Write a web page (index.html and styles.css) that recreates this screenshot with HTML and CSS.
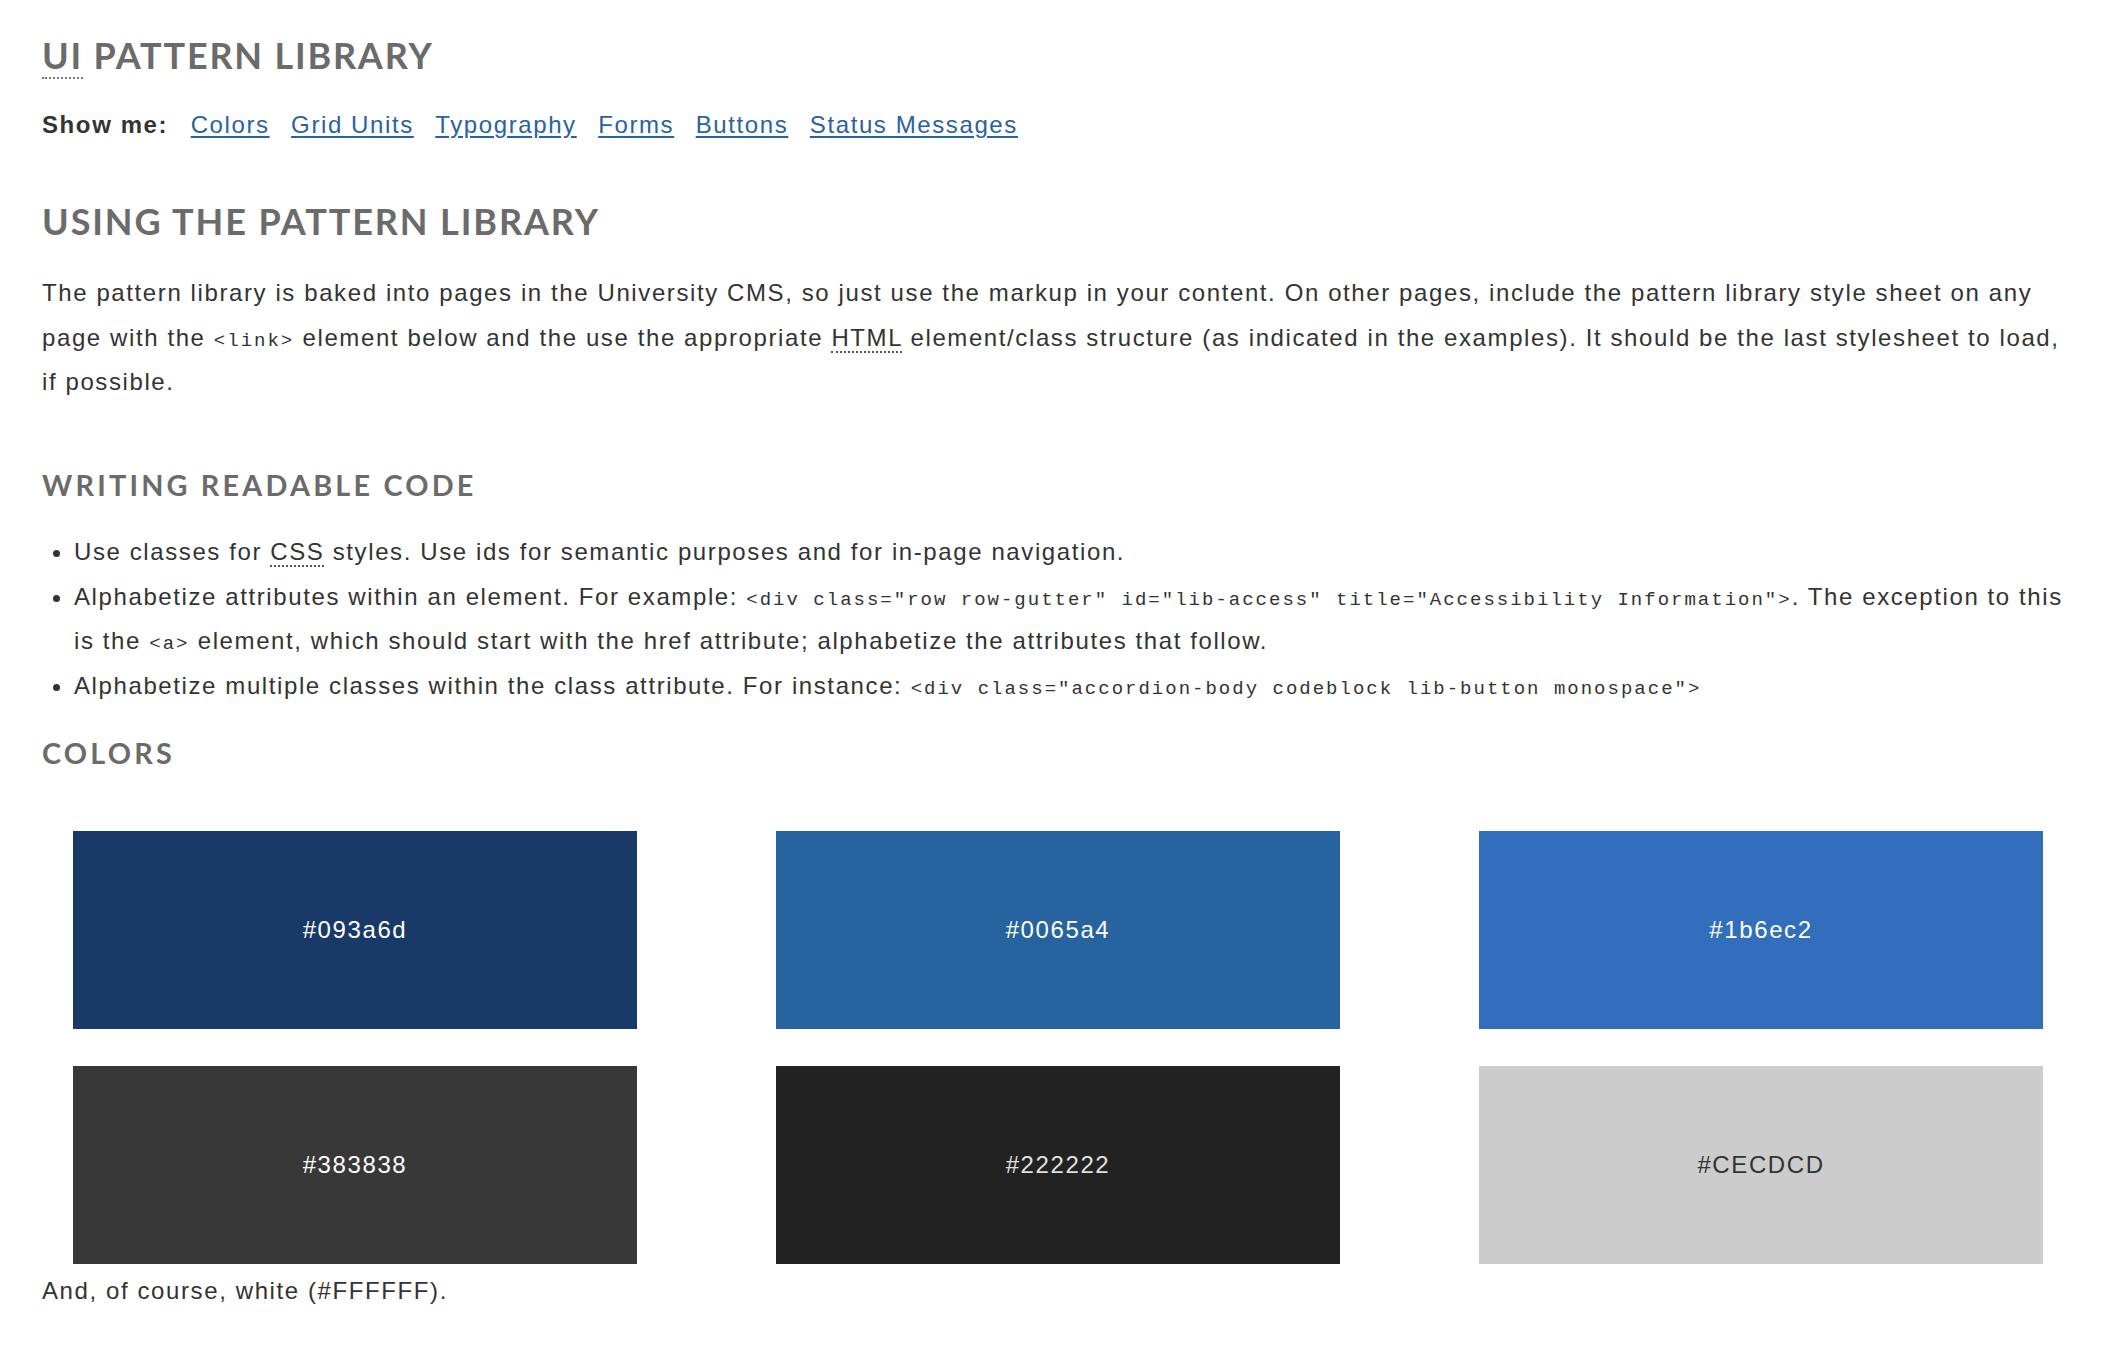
FILE: index.html
```html
<!DOCTYPE html>
<html lang="en">
<head>
<meta charset="utf-8">
<title>UI Pattern Library</title>
<link rel="stylesheet" href="styles.css">
</head>
<body>
<main class="page">
  <h1 class="title"><abbr title="User Interface">UI</abbr> PATTERN LIBRARY</h1>
  <nav class="showme">
    <strong class="showme-label">Show me:</strong>
    <a href="#colors">Colors</a>
    <a href="#grid">Grid Units</a>
    <a href="#type">Typography</a>
    <a href="#forms">Forms</a>
    <a href="#buttons">Buttons</a>
    <a href="#status">Status Messages</a>
  </nav>

  <h2 class="section-title">USING THE PATTERN LIBRARY</h2>
  <p class="text intro">The pattern library is baked into pages in the University CMS, so just use the markup in your content. On other pages, include the pattern library style sheet on any page with the <code>&lt;link&gt;</code> element below and the use the appropriate <abbr title="HyperText Markup Language">HTML</abbr> element/class structure (as indicated in the examples). It should be the last stylesheet to load, if possible.</p>

  <h3 class="sub-title">WRITING READABLE CODE</h3>
  <ul class="text rules">
    <li>Use classes for <abbr title="Cascading Style Sheets">CSS</abbr> styles. Use ids for semantic purposes and for in-page navigation.</li>
    <li>Alphabetize attributes within an element. For example: <code>&lt;div class="row row-gutter" id="lib-access" title="Accessibility Information"&gt;</code>. The exception to this is the <code>&lt;a&gt;</code> element, which should start with the href attribute; alphabetize the attributes that follow.</li>
    <li>Alphabetize multiple classes within the class attribute. For instance: <code>&lt;div class="accordion-body codeblock lib-button monospace"&gt;</code></li>
  </ul>

  <h3 class="sub-title colors-title" id="colors">COLORS</h3>
  <div class="swatches">
    <div class="swatch sw-1">#093a6d</div>
    <div class="swatch sw-2">#0065a4</div>
    <div class="swatch sw-3">#1b6ec2</div>
    <div class="swatch sw-4">#383838</div>
    <div class="swatch sw-5">#222222</div>
    <div class="swatch sw-6">#CECDCD</div>
  </div>
  <p class="text white-note">And, of course, white (#FFFFFF).</p>
</main>
</body>
</html>
```

FILE: styles.css
```css
html, body {
  margin: 0;
  padding: 0;
  background: #ffffff;
}

body {
  font-family: "Liberation Sans", Arial, Helvetica, sans-serif;
  font-size: 24px;
  letter-spacing: 1.6px;
  color: #333333;
}

.page {
  padding: 0 38px 0 42px;
}

abbr {
  text-decoration: none;
  border-bottom: 2px dotted #555;
}

.title {
  font-family: Lato, "Open Sans", sans-serif;
  font-weight: 700;
  font-size: 36px;
  line-height: 43px;
  letter-spacing: 1.8px;
  color: #6b6b6b;
  margin: 34px 0 0;
}

.title abbr {
  border-bottom-color: #777;
}

.showme {
  display: flex;
  align-items: baseline;
  gap: 21.5px;
  line-height: 44.8px;
  margin-top: 26px;
}

.showme-label {
  font-weight: 700;
  color: #333;
  margin-right: 1px;
}

.showme a {
  color: #2a62a0;
  text-decoration: underline;
  text-underline-offset: 3px;
}

.section-title {
  font-family: Lato, "Open Sans", sans-serif;
  font-weight: 700;
  font-size: 36px;
  line-height: 43px;
  letter-spacing: 1.9px;
  color: #6b6b6b;
  margin: 52px 0 0;
}

.text {
  line-height: 44.8px;
  margin: 0;
}

.intro {
  margin-top: 28px;
}

code {
  font-family: "Liberation Mono", "Courier New", monospace;
  font-size: 19px;
  line-height: 1;
  letter-spacing: 2px;
  color: #333;
}

.sub-title {
  font-family: Lato, "Open Sans", sans-serif;
  font-weight: 700;
  font-size: 28.8px;
  line-height: 34.6px;
  letter-spacing: 3.2px;
  color: #6b6b6b;
  margin: 63px 0 0;
}

.rules {
  margin-top: 27px;
  padding-left: 32px;
  list-style: disc;
}

.colors-title {
  margin-top: 27px;
}

.swatches {
  display: grid;
  grid-template-columns: repeat(3, 564px);
  grid-auto-rows: 198px;
  column-gap: 139px;
  row-gap: 37px;
  margin: 60px 0 0 31px;
}

.swatch {
  display: flex;
  align-items: center;
  justify-content: center;
  color: #ffffff;
}

.sw-1 { background: #193a68; }
.sw-2 { background: #27639e; }
.sw-3 { background: #336ebc; }
.sw-4 { background: #383838; }
.sw-5 { background: #222222; color: #e0e0e0; }
.sw-6 { background: #cccccc; color: #333333; }

.white-note {
  margin-top: 5px;
}
```
